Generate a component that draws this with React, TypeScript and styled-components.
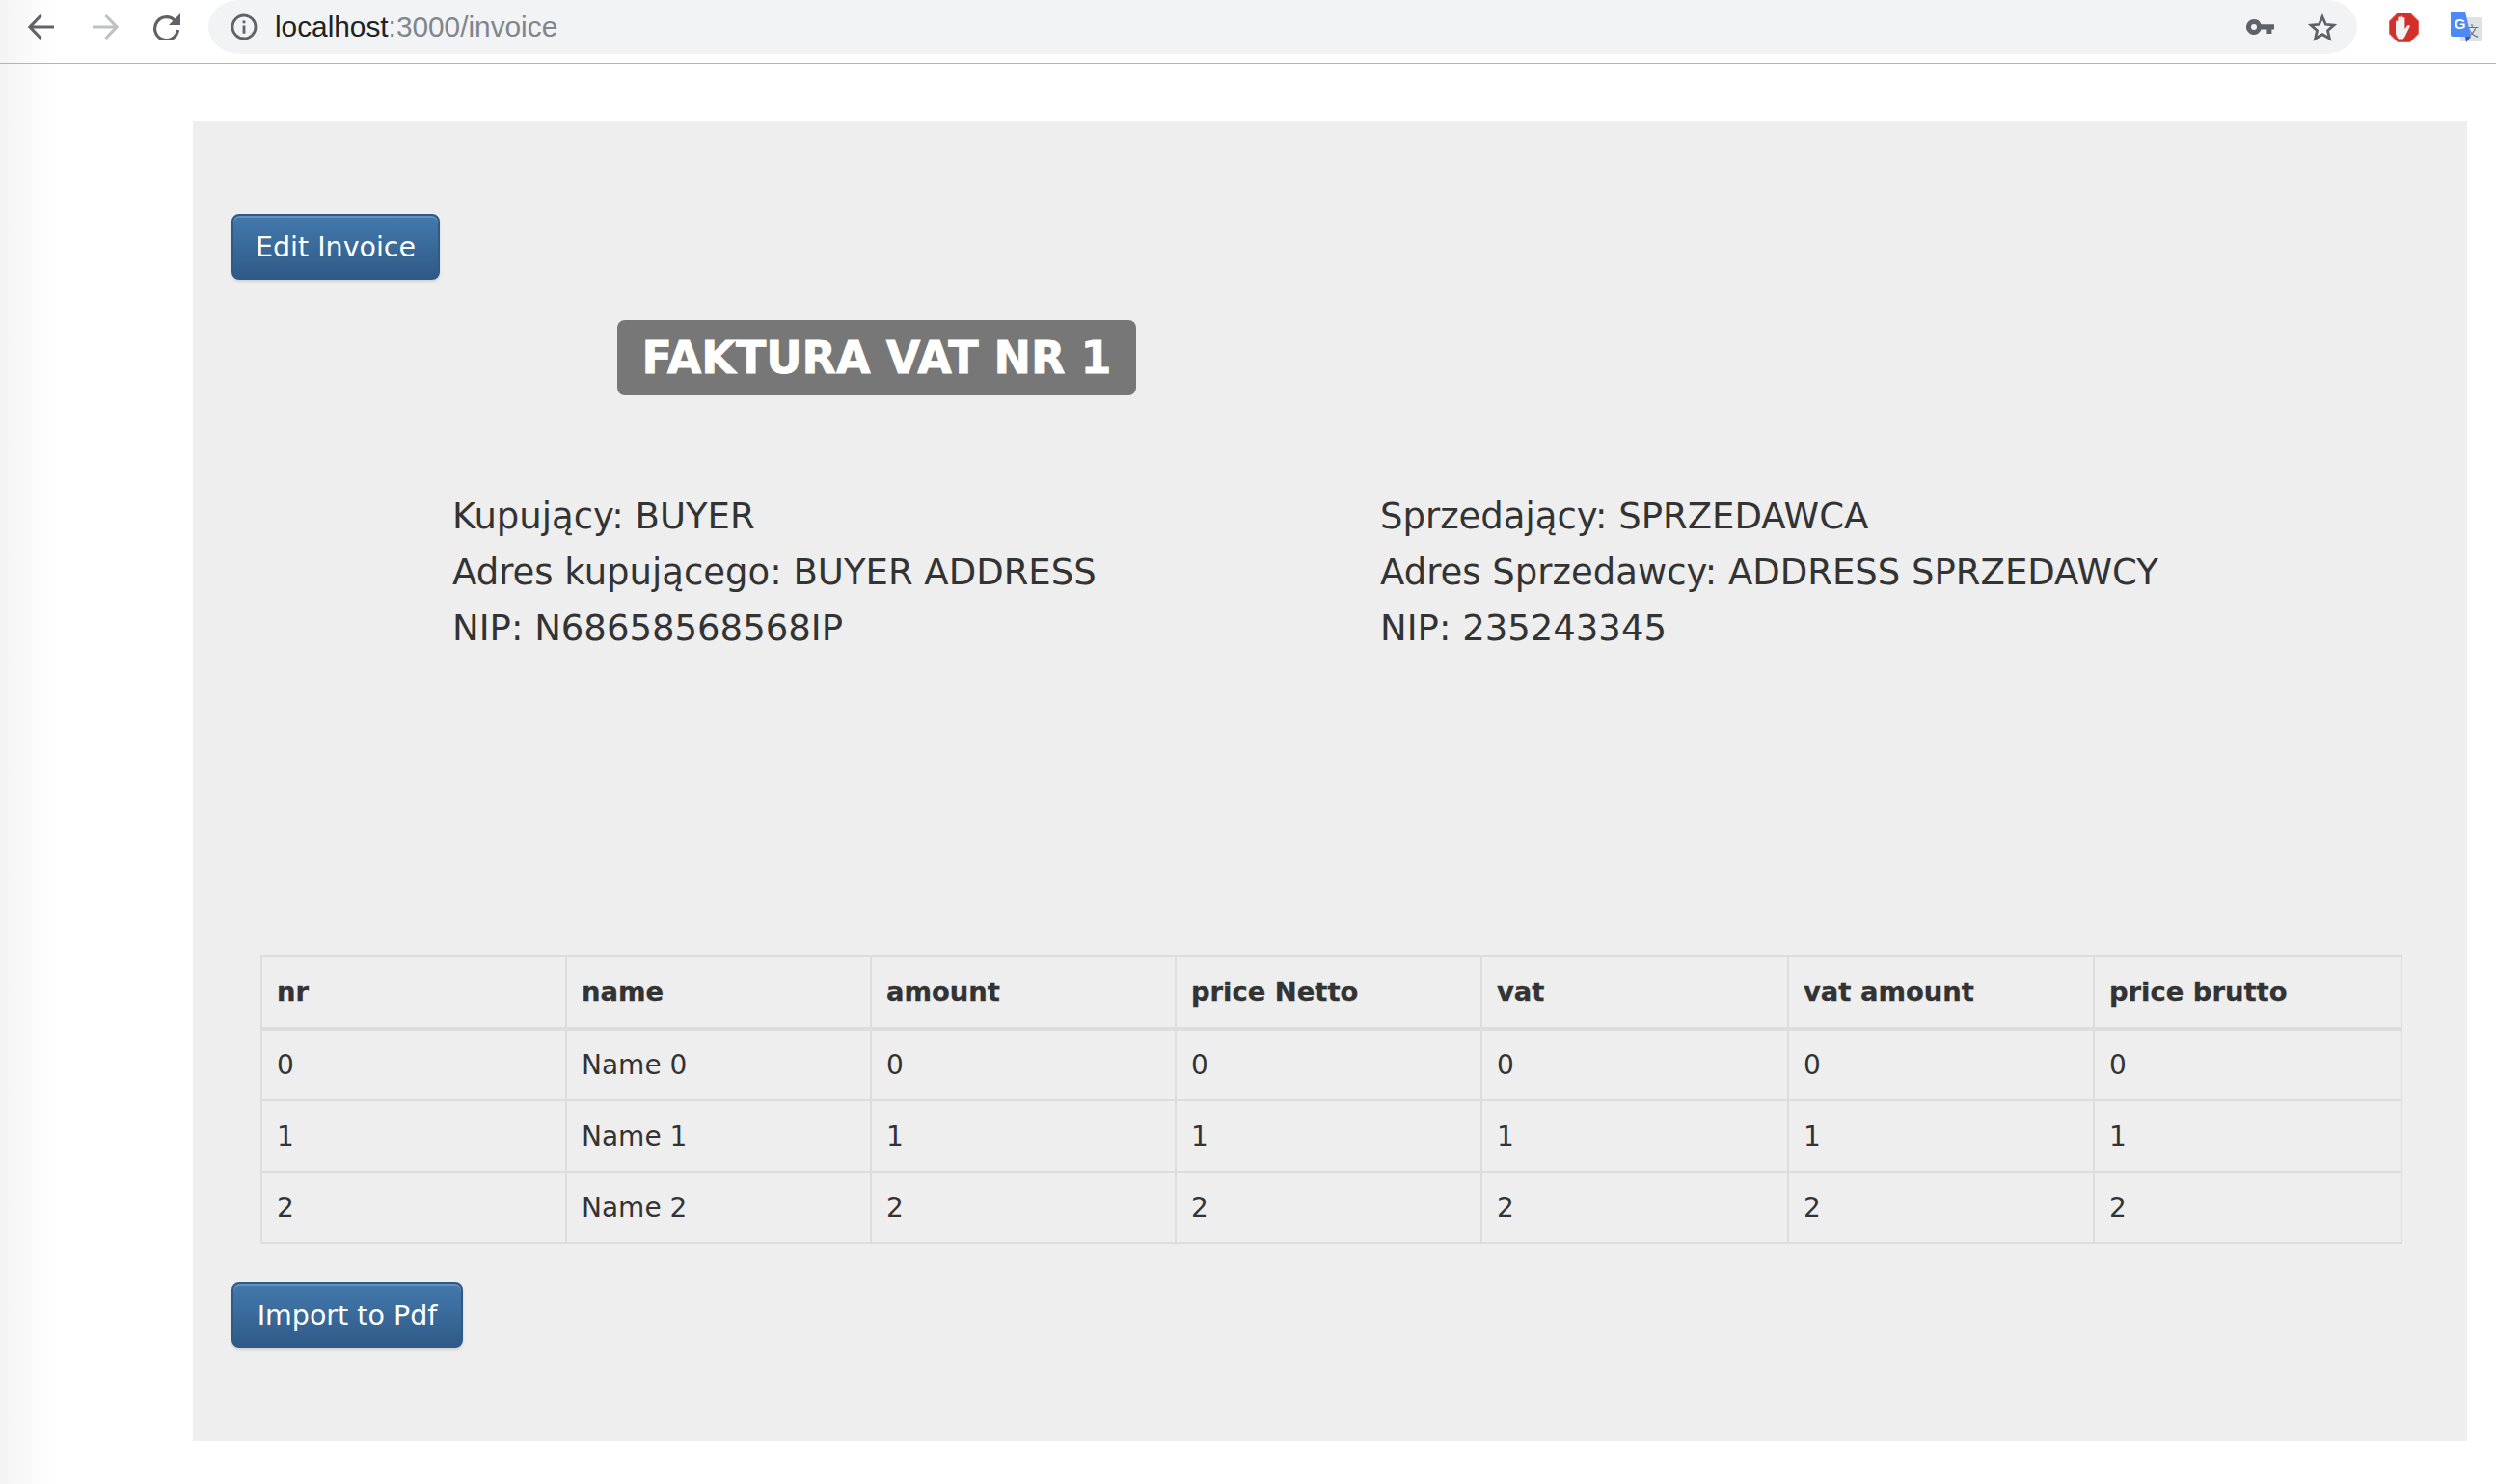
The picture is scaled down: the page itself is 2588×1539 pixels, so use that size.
import React from "react";
import styled, { createGlobalStyle } from "styled-components";

const GlobalStyle = createGlobalStyle`
  html, body {
    margin: 0;
    padding: 0;
  }

  body {
    background: linear-gradient(to right, #f4f4f4, #ffffff 56px);
    color: #333333;
    font-family: "DejaVu Sans", Verdana, sans-serif;
  }
`;

const Toolbar = styled.header`
  display: flex;
  align-items: flex-start;
  height: 65px;
  border-bottom: 1px solid #b4b4b4;
  padding-left: 28px;
  padding-right: 16px;
`;

const NavButton = styled.div<{ $width: number }>`
  display: flex;
  align-items: center;
  width: ${(p) => p.$width}px;
  height: 56px;
  flex: none;
`;

const AddressBar = styled.div`
  display: flex;
  align-items: center;
  flex: none;
  width: 2228px;
  height: 56px;
  padding: 0 21px 0 23px;
  box-sizing: border-box;
  background: #f1f3f4;
  border-radius: 32px / 28px;
`;

const Url = styled.div`
  margin-left: 18px;
  flex: 1;
  font-family: "Liberation Sans", Arial, sans-serif;
  font-size: 29.8px;
  color: #202124;

  span {
    color: #80868b;
  }
`;

const BarIcons = styled.div`
  display: flex;
  align-items: center;
  gap: 35px;
`;

const Extensions = styled.div`
  display: flex;
  align-items: center;
  gap: 33px;
  margin-left: 33px;
  height: 56px;
`;

const Panel = styled.main`
  width: 2358px;
  height: 1368px;
  margin: 60px 0 0 200px;
  padding: 96px 40px 0;
  box-sizing: border-box;
  background: #eeeeee;
`;

const Button = styled.button<{ $width: number }>`
  display: block;
  width: ${(p) => p.$width}px;
  height: 68px;
  padding: 0;
  border: 2px solid #2e5a88;
  border-radius: 8px;
  background: linear-gradient(to bottom, #4379ad, #2f5a87);
  box-shadow: inset 0 2px 0 rgba(255, 255, 255, 0.18), 0 2px 3px rgba(0, 0, 0, 0.12);
  color: #ffffff;
  font-family: inherit;
  font-size: 28.5px;
  white-space: nowrap;
`;

const ImportButton = styled(Button)`
  margin-top: 40px;
`;

const Title = styled.h1`
  width: 538px;
  height: 78px;
  margin: 42px 0 0 400px;
  display: flex;
  align-items: center;
  justify-content: center;
  background: #777777;
  border-radius: 8px;
  color: #ffffff;
  font-size: 46px;
  font-weight: 700;
  -webkit-text-stroke: 0.8px #ffffff;
`;

const Parties = styled.section`
  display: grid;
  grid-template-columns: 962px 1fr;
  margin: 97px 0 309px 229px;
`;

const Party = styled.div`
  font-size: 37px;
  line-height: 58px;
  color: #333333;
`;

const Table = styled.table`
  width: 2219px;
  margin-left: 30px;
  border-collapse: collapse;
  table-layout: fixed;
  border: 2px solid #dddddd;
  font-size: 28px;
`;

const HeadCell = styled.th<{ $width: number }>`
  width: ${(p) => p.$width}px;
  height: 76px;
  padding: 0 15px;
  box-sizing: border-box;
  text-align: left;
  font-size: 27.4px;
  font-weight: 700;
  -webkit-text-stroke: 0.3px #333333;
  border: 2px solid #dddddd;
  border-bottom-width: 4px;
`;

const Cell = styled.td`
  height: 74px;
  padding: 0 15px;
  box-sizing: border-box;
  border: 2px solid #dddddd;
`;

const columns = [
  { label: "nr", width: 316 },
  { label: "name", width: 316 },
  { label: "amount", width: 316 },
  { label: "price Netto", width: 317 },
  { label: "vat", width: 318 },
  { label: "vat amount", width: 317 },
  { label: "price brutto", width: 319 },
];

const rows = [0, 1, 2];

const Back = () => (
  <svg width="30" height="28" viewBox="0 0 30 28" fill="none" stroke="#5f6368" strokeWidth="3.2">
    <path d="M28 14H4M14.5 2 3 14l11.5 12" />
  </svg>
);

const Forward = () => (
  <svg width="30" height="28" viewBox="0 0 30 28" fill="none" stroke="#bdc1c6" strokeWidth="3.2">
    <path d="M2 14h24M15.5 2 27 14 15.5 26" />
  </svg>
);

const Reload = () => (
  <svg width="30" height="28" viewBox="0 0 30 28">
    <path d="M24 8.2A12 12 0 1 0 26.5 17" fill="none" stroke="#5f6368" strokeWidth="3.2" />
    <path d="M29 0v12H17z" fill="#5f6368" />
  </svg>
);

const Info = () => (
  <svg width="28" height="28" viewBox="0 0 28 28" fill="none">
    <circle cx="14" cy="14" r="12" stroke="#5f6368" strokeWidth="2.8" />
    <path d="M12.6 12.4h2.8v8.4h-2.8zM12.6 7.4h2.8v2.8h-2.8z" fill="#5f6368" />
  </svg>
);

const Key = () => (
  <svg width="29" height="16" viewBox="0 0 29 16">
    <path
      fillRule="evenodd"
      d="M8 0a8 8 0 0 1 7.5 5.2H29v5.400h-2.600V15h-5V10.600h-5.900A8 8 0 1 1 8 0zm0 5a3 3 0 1 0 0 6 3 3 0 0 0 0-6z"
      fill="#5f6368"
    />
  </svg>
);

const Star = () => (
  <svg width="30" height="29" viewBox="0 0 30 29" fill="none">
    <path
      d="M15 3.500l3.400 7.800 8.400.8-6.300 5.600 1.900 8.300L15 21.700 7.600 26l1.900-8.300-6.300-5.600 8.400-.8z"
      stroke="#5f6368"
      strokeWidth="2.8"
      strokeLinejoin="miter"
    />
  </svg>
);

const AdBlock = () => (
  <svg width="31" height="31" viewBox="0 0 31 31">
    <path d="M9 .5h13L30.500 9v13L22 30.500H9L.5 22V9z" fill="#d3302b" stroke="#e0615a" />
    <path
      d="M10 27.500c-1.500-1.500-3-4-3-7V9.500c0-1.500 2.300-1.500 2.300 0V15V5.500c0-1.500 2.400-1.500 2.400 0V14V4.500c0-1.500 2.400-1.500 2.400 0V14V6c0-1.500 2.300-1.500 2.300 0v11l2.800-3.400c1.200-1.300 3.200-.2 2.300 1.400l-3.800 7.500c-.8 2-1.700 3.500-3 5z"
      fill="#f2f2f2"
    />
  </svg>
);

const Translate = () => (
  <svg width="32" height="32" viewBox="0 0 32 32">
    <rect x="10" y="6" width="22" height="25" rx="1" fill="#dfe1e3" />
    <text x="22" y="25" fontSize="14" textAnchor="middle" fill="#5f7a8c" fontFamily="'Noto Sans CJK SC', sans-serif">
      文
    </text>
    <path d="M0 0h15l6 26H2a2 2 0 0 1-2-2z" fill="#4c8bf5" />
    <path d="M15 26h6l-5 6z" fill="#3f51b5" />
    <text x="9.500" y="18" fontSize="15" fontWeight="700" textAnchor="middle" fill="#ffffff" fontFamily="'Liberation Sans', sans-serif">
      G
    </text>
  </svg>
);

export default function App() {
  return (
    <>
      <GlobalStyle />
      <Toolbar>
        <NavButton $width={66}>
          <Back />
        </NavButton>
        <NavButton $width={64}>
          <Forward />
        </NavButton>
        <NavButton $width={58}>
          <Reload />
        </NavButton>
        <AddressBar>
          <Info />
          <Url>
            localhost<span>:3000/invoice</span>
          </Url>
          <BarIcons>
            <Key />
            <Star />
          </BarIcons>
        </AddressBar>
        <Extensions>
          <AdBlock />
          <Translate />
        </Extensions>
      </Toolbar>
      <Panel>
        <Button $width={216}>Edit Invoice</Button>
        <Title>FAKTURA VAT NR 1</Title>
        <Parties>
          <Party>
            <div>Kupujący: BUYER</div>
            <div>Adres kupującego: BUYER ADDRESS</div>
            <div>NIP: N68658568568IP</div>
          </Party>
          <Party>
            <div>Sprzedający: SPRZEDAWCA</div>
            <div>Adres Sprzedawcy: ADDRESS SPRZEDAWCY</div>
            <div>NIP: 235243345</div>
          </Party>
        </Parties>
        <Table>
          <thead>
            <tr>
              {columns.map((c) => (
                <HeadCell key={c.label} $width={c.width}>
                  {c.label}
                </HeadCell>
              ))}
            </tr>
          </thead>
          <tbody>
            {rows.map((r) => (
              <tr key={r}>
                <Cell>{r}</Cell>
                <Cell>Name {r}</Cell>
                <Cell>{r}</Cell>
                <Cell>{r}</Cell>
                <Cell>{r}</Cell>
                <Cell>{r}</Cell>
                <Cell>{r}</Cell>
              </tr>
            ))}
          </tbody>
        </Table>
        <ImportButton $width={240}>Import to Pdf</ImportButton>
      </Panel>
    </>
  );
}
